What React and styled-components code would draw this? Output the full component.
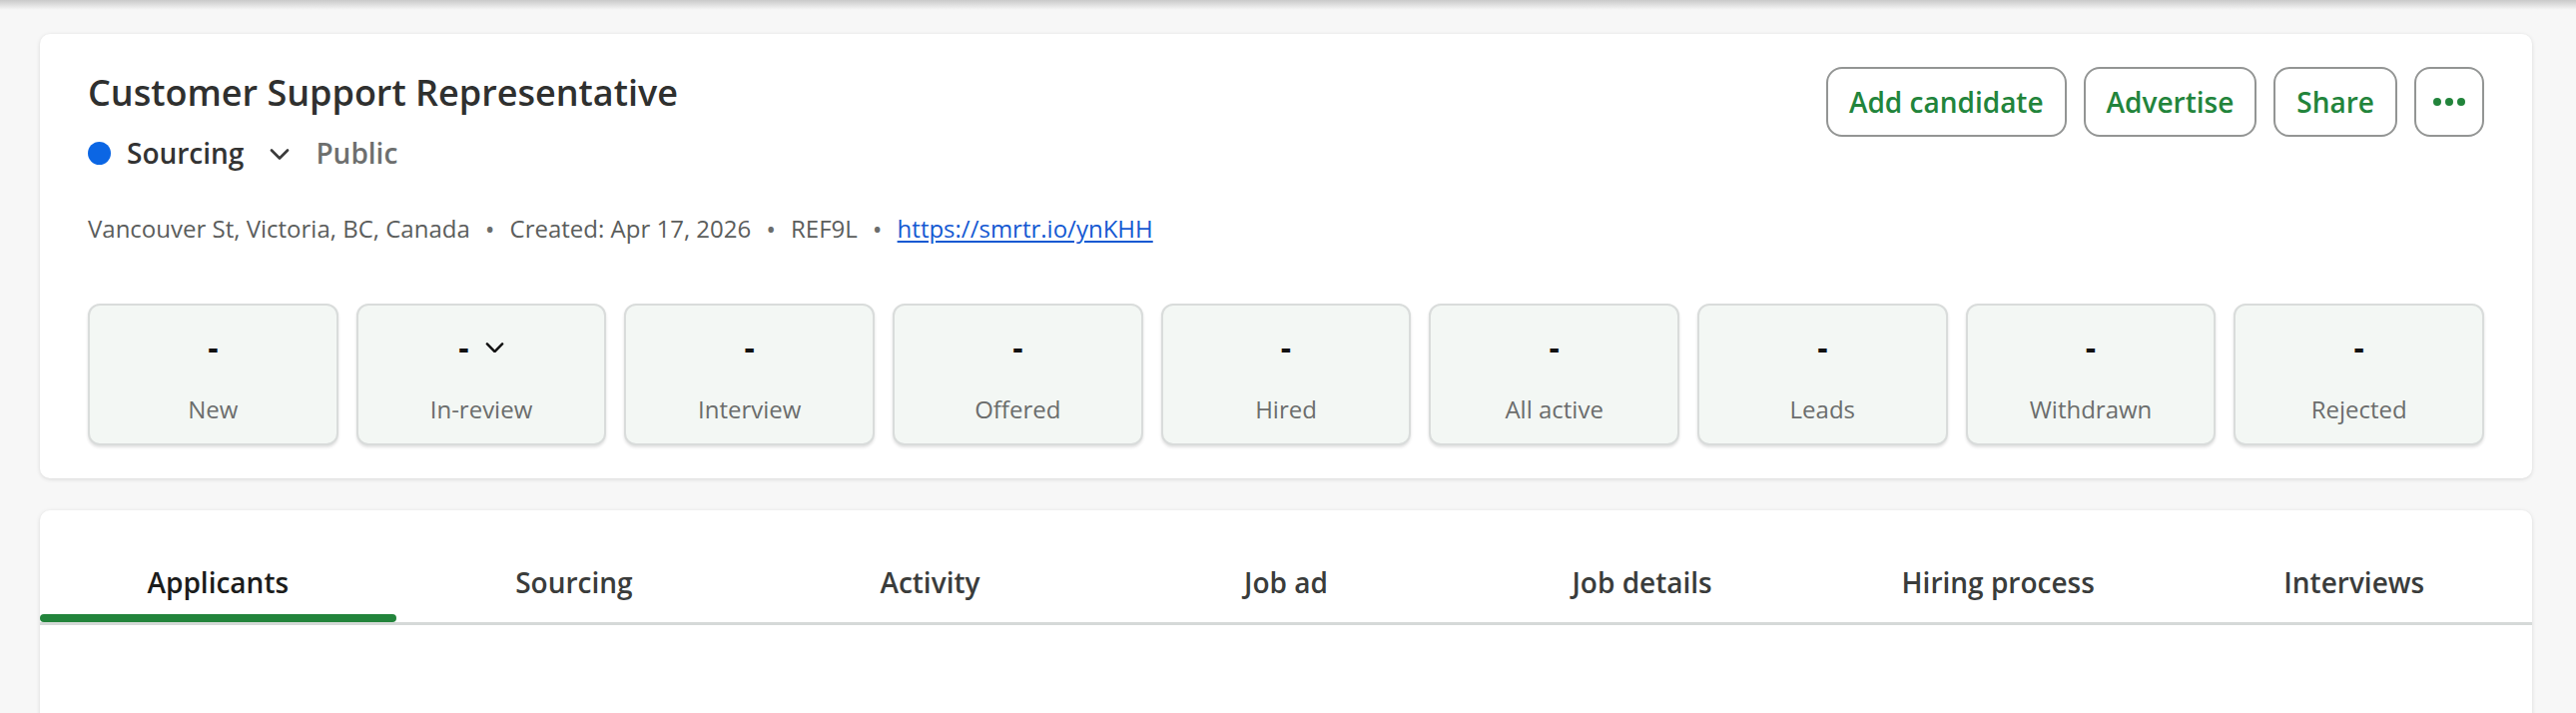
import React from 'react'
import styled, { createGlobalStyle } from 'styled-components'

const GlobalStyle = createGlobalStyle`
  * { box-sizing: border-box; }
  html, body {
    margin: 0;
    padding: 0;
    background: #f7f7f7;
    font-family: "Open Sans", "Liberation Sans", sans-serif;
    overflow: hidden;
  }
`

const stages = ['New', 'In-review', 'Interview', 'Offered', 'Hired', 'All active', 'Leads', 'Withdrawn', 'Rejected']
const tabs = ['Applicants', 'Sourcing', 'Activity', 'Job ad', 'Job details', 'Hiring process', 'Interviews']

const Chevron = ({ size = 20, stroke = 2.6, color = '#3a3a3a' }) => (
  <svg width={size} height={size * 0.55} viewBox="0 0 20 11" fill="none">
    <path d="M2 1.5 L10 9.5 L18 1.5" stroke={color} strokeWidth={stroke} strokeLinecap="round" strokeLinejoin="round" />
  </svg>
)

const JobPage = () => {
  return (
    <Page>
      <TopShade />
      <Main>
        <HeaderCard>
          <HeaderRow>
            <div>
              <Title>Customer Support Representative</Title>
              <StatusRow>
                <StatusDot />
                <StatusLabel>Sourcing</StatusLabel>
                <StatusToggle><Chevron /></StatusToggle>
                <Visibility>Public</Visibility>
              </StatusRow>
            </div>
            <Actions>
              <OutlineButton>Add candidate</OutlineButton>
              <OutlineButton>Advertise</OutlineButton>
              <OutlineButton>Share</OutlineButton>
              <OutlineButton $square>
                <Dots><i /><i /><i /></Dots>
              </OutlineButton>
            </Actions>
          </HeaderRow>

          <Meta>
            <span>Vancouver St, Victoria, BC, Canada</span>
            <Sep>•</Sep>
            <span>Created: Apr 17, 2026</span>
            <Sep>•</Sep>
            <span>REF9L</span>
            <Sep>•</Sep>
            <MetaLink href="#">https://smrtr.io/ynKHH</MetaLink>
          </Meta>

          <StageGrid>
            {stages.map((s) => (
              <StageCard key={s}>
                <StageCount>
                  -
                  {s === 'In-review' && <Chevron size={19} stroke={2.6} color="#111" />}
                </StageCount>
                <StageName>{s}</StageName>
              </StageCard>
            ))}
          </StageGrid>
        </HeaderCard>

        <TabsCard>
          <TabList>
            {tabs.map((t, i) => (
              <Tab key={t} $active={i === 0}>{t}</Tab>
            ))}
          </TabList>
        </TabsCard>
      </Main>
    </Page>
  )
}

export default function App() {
  return (
    <>
      <GlobalStyle />
      <JobPage />
    </>
  )
}

const Page = styled.div`
  min-height: 714px;
  background: #f7f7f7;
`

const TopShade = styled.div`
  height: 10px;
  margin-bottom: -10px;
  background: linear-gradient(#c9c9c9, rgba(247, 247, 247, 0));
`

const Main = styled.div`
  padding: 34px 44px 0 40px;
  display: flex;
  flex-direction: column;
  gap: 32px;
`

const HeaderCard = styled.section`
  background: #fff;
  border-radius: 10px;
  box-shadow: 0 1px 4px rgba(0, 0, 0, 0.13);
  padding: 33px 48px 33px 48px;
`

const HeaderRow = styled.div`
  display: flex;
  justify-content: space-between;
  align-items: flex-start;
`

const Title = styled.h1`
  margin: 2px 0 0;
  font-size: 36px;
  line-height: 48px;
  font-weight: 600;
  color: #2f302f;
`

const StatusRow = styled.div`
  margin-top: 18px;
  display: flex;
  align-items: center;
  height: 36px;
`

const StatusDot = styled.span`
  width: 23px;
  height: 23px;
  border-radius: 50%;
  background: #0b66e4;
  margin-right: 16px;
`

const StatusLabel = styled.span`
  font-size: 28px;
  line-height: 36px;
  font-weight: 600;
  color: #333;
`

const StatusToggle = styled.span`
  display: flex;
  margin: 2px 26px 0 26px;
`

const Visibility = styled.span`
  font-size: 28px;
  line-height: 36px;
  font-weight: 600;
  color: #6d6f6e;
`

const Actions = styled.div`
  display: flex;
  gap: 17px;
`

const OutlineButton = styled.button`
  height: 70px;
  min-width: 70px;
  padding: ${(p) => (p.$square ? '0' : '0 21px')};
  border: 2px solid #939594;
  border-radius: 16px;
  background: #fff;
  color: #22843b;
  font-family: inherit;
  font-size: 28px;
  font-weight: 600;
  display: flex;
  align-items: center;
  justify-content: center;
`

const Dots = styled.span`
  display: flex;
  gap: 4px;
  i {
    width: 8px;
    height: 8px;
    border-radius: 50%;
    background: #22843b;
  }
`

const Meta = styled.div`
  margin-top: 42px;
  font-size: 24px;
  line-height: 32px;
  color: #5b5d5c;
  display: flex;
  align-items: center;
`

const Sep = styled.span`
  margin: 0 15px;
  font-size: 26px;
  color: #6b6d6c;
`

const MetaLink = styled.a`
  color: #1559d2;
  text-decoration: underline;
  text-underline-offset: 3px;
`

const StageGrid = styled.div`
  margin-top: 59px;
  display: grid;
  grid-template-columns: repeat(9, 1fr);
  gap: 18px;
`

const StageCard = styled.div`
  height: 142px;
  background: #f3f7f4;
  border: 2px solid #d9dcdb;
  border-radius: 12px;
  box-shadow: 0 2px 3px rgba(0, 0, 0, 0.12);
  padding-top: 24px;
  display: flex;
  flex-direction: column;
  align-items: center;
`

const StageCount = styled.div`
  height: 36px;
  font-size: 32px;
  line-height: 36px;
  font-weight: 700;
  color: #111;
  display: flex;
  align-items: center;
  gap: 16px;
`

const StageName = styled.div`
  margin-top: 28px;
  font-size: 24px;
  line-height: 32px;
  color: #6b6d6c;
`

const TabsCard = styled.section`
  height: 260px;
  background: #fff;
  border-radius: 10px;
  box-shadow: 0 1px 4px rgba(0, 0, 0, 0.13);
  overflow: hidden;
`

const TabList = styled.div`
  display: flex;
  border-bottom: 3px solid #d5d9d8;
`

const Tab = styled.div`
  flex: 1;
  position: relative;
  padding: 54px 0 22px;
  text-align: center;
  font-size: 28px;
  line-height: 36px;
  font-weight: 600;
  color: ${(p) => (p.$active ? '#1b1c1b' : '#3a3c3b')};

  &::after {
    content: '';
    display: ${(p) => (p.$active ? 'block' : 'none')};
    position: absolute;
    left: 0;
    right: 0;
    bottom: 0;
    height: 8px;
    border-radius: 4px;
    background: #22843b;
  }
`
